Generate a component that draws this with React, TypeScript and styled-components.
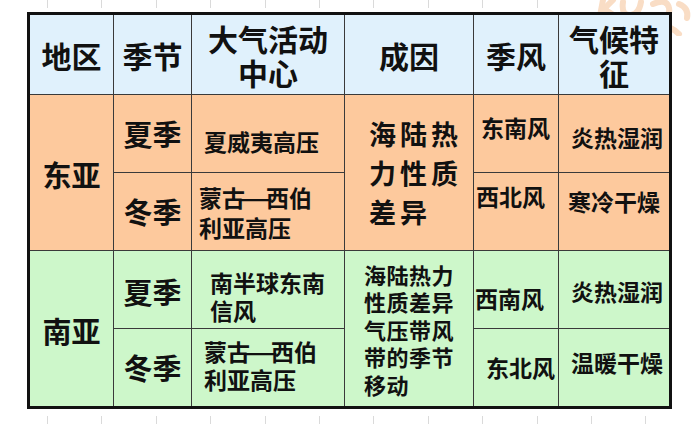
import React from "react";
import styled, { createGlobalStyle } from "styled-components";

const Global = createGlobalStyle`
  html, body { margin: 0; padding: 0; background: #fff; }
  body {
    width: 700px;
    height: 425px;
    overflow: hidden;
    font-family: "Noto Sans CJK SC", "Noto Sans", sans-serif;
  }
`;

const Page = styled.div`
  position: relative;
  width: 700px;
  height: 425px;
  display: flex;
  flex-direction: column;
`;

const Ruler = styled.div<{ $h: number; $top: number }>`
  height: ${(p) => p.$h}px;
  padding-top: ${(p) => p.$top}px;
  padding-left: 47px;
  display: flex;
  align-items: flex-start;
  box-sizing: border-box;
`;

const Tick = styled.span`
  flex: 0 0 54.4px;
  height: 8px;
  border-left: 1.5px solid #dadada;
  box-sizing: border-box;
`;

const Grid = styled.div`
  position: relative;
  z-index: 1;
  margin-left: 27px;
  width: 645px;
  box-sizing: border-box;
  border: 3px solid #111;
  display: grid;
  grid-template-columns: 83px 77px 152px 128px 84px 110px;
  grid-template-rows: 79px 77px 77px 77px 77px;
  gap: 1px;
  background: #3a3a3a;
`;

type Tone = "head" | "east" | "south";
const tones: Record<Tone, string> = {
  head: "#e0f1fc",
  east: "#fdc99d",
  south: "#cdf7ca",
};

const Cell = styled.div<{
  $tone: Tone;
  $span?: number;
  $size: number;
  $lh?: number;
  $pl?: number;
  $dy?: number;
  $ls?: number;
}>`
  grid-row: span ${(p) => p.$span ?? 1};
  background: ${(p) => tones[p.$tone]};
  display: flex;
  flex-direction: column;
  justify-content: center;
  align-items: ${(p) => (p.$pl === undefined ? "center" : "flex-start")};
  text-align: ${(p) => (p.$pl === undefined ? "center" : "left")};
  padding-left: ${(p) => p.$pl ?? 0}px;
  padding-top: ${(p) => Math.max(0, 2 * (p.$dy ?? 0))}px;
  padding-bottom: ${(p) => Math.max(0, -2 * (p.$dy ?? 0))}px;
  box-sizing: border-box;
  font-size: ${(p) => p.$size}px;
  line-height: ${(p) => p.$lh ?? p.$size * 1.2}px;
  letter-spacing: ${(p) => p.$ls ?? 0}px;
  font-weight: 700;
  color: #111;
  white-space: nowrap;
`;

const Dash = styled.span`
  display: inline-block;
  transform: scaleX(1.7);
`;

const Watermark = styled.svg`
  position: absolute;
  top: 0;
  right: 5px;
  z-index: 0;
  pointer-events: none;
`;

const top = Array.from({ length: 10 });
const bottom = Array.from({ length: 12 });

export default function App() {
  return (
    <>
      <Global />
      <Page>
        <Watermark width="100" height="36" viewBox="0 0 100 36">
          <g fill="none" stroke="#f8d2b2" strokeWidth="6" strokeLinecap="round" opacity="0.75">
            <path d="M8 0 L5 16" />
            <path d="M18 0 L9 9 L20 16" />
            <path d="M28 2 Q26 16 36 15 Q44 14 46 2" />
            <path d="M58 4 Q72 -2 74 8 Q76 18 62 24 Q76 26 84 34" />
            <path d="M84 4 Q94 8 92 18" />
          </g>
        </Watermark>
        <Ruler $h={12} $top={0}>
          {top.map((_, i) => (
            <Tick key={i} />
          ))}
        </Ruler>
        <Grid>
          <Cell $tone="head" $size={30} $lh={34}>地区</Cell>
          <Cell $tone="head" $size={30} $lh={34}>季节</Cell>
          <Cell $tone="head" $size={30} $lh={34}>
            大气活动
            <br />
            中心
          </Cell>
          <Cell $tone="head" $size={30} $lh={34}>成因</Cell>
          <Cell $tone="head" $size={30} $lh={34}>季风</Cell>
          <Cell $tone="head" $size={30} $lh={34}>
            气候特
            <br />
            征
          </Cell>

          <Cell $tone="east" $span={2} $size={29} $dy={2}>东亚</Cell>
          <Cell $tone="east" $size={29}>夏季</Cell>
          <Cell $tone="east" $size={23} $pl={12} $dy={8}>夏威夷高压</Cell>
          <Cell $tone="east" $span={2} $size={27} $lh={39} $ls={4} $pl={24}>
            海陆热
            <br />
            力性质
            <br />
            差异
          </Cell>
          <Cell $tone="east" $size={23} $pl={7} $dy={-6}>东南风</Cell>
          <Cell $tone="east" $size={23} $pl={12} $dy={4}>炎热湿润</Cell>

          <Cell $tone="east" $size={29}>冬季</Cell>
          <Cell $tone="east" $size={23} $lh={30} $pl={7}>
            <span>
              蒙古<Dash>—</Dash>西伯
            </span>
            利亚高压
          </Cell>
          <Cell $tone="east" $size={23} $pl={2} $dy={-15}>西北风</Cell>
          <Cell $tone="east" $size={23} $pl={9} $dy={-10}>寒冷干燥</Cell>

          <Cell $tone="south" $span={2} $size={29} $dy={2}>南亚</Cell>
          <Cell $tone="south" $size={29} $dy={2}>夏季</Cell>
          <Cell $tone="south" $size={23} $lh={28} $pl={18} $dy={6}>
            南半球东南
            <br />
            信风
          </Cell>
          <Cell $tone="south" $span={2} $size={22} $lh={27.5} $ls={0.5} $pl={19} $dy={1}>
            海陆热力
            <br />
            性质差异
            <br />
            气压带风
            <br />
            带的季节
            <br />
            移动
          </Cell>
          <Cell $tone="south" $size={23} $pl={1} $dy={9}>西南风</Cell>
          <Cell $tone="south" $size={23} $pl={12} $dy={2}>炎热湿润</Cell>

          <Cell $tone="south" $size={29}>冬季</Cell>
          <Cell $tone="south" $size={23} $lh={28} $pl={12} $dy={-3}>
            <span>
              蒙古<Dash>—</Dash>西伯
            </span>
            利亚高压
          </Cell>
          <Cell $tone="south" $size={23} $pl={12}>东北风</Cell>
          <Cell $tone="south" $size={23} $pl={12} $dy={-5}>温暖干燥</Cell>
        </Grid>
        <Ruler $h={14} $top={7}>
          {bottom.map((_, i) => (
            <Tick key={i} />
          ))}
        </Ruler>
      </Page>
    </>
  );
}
